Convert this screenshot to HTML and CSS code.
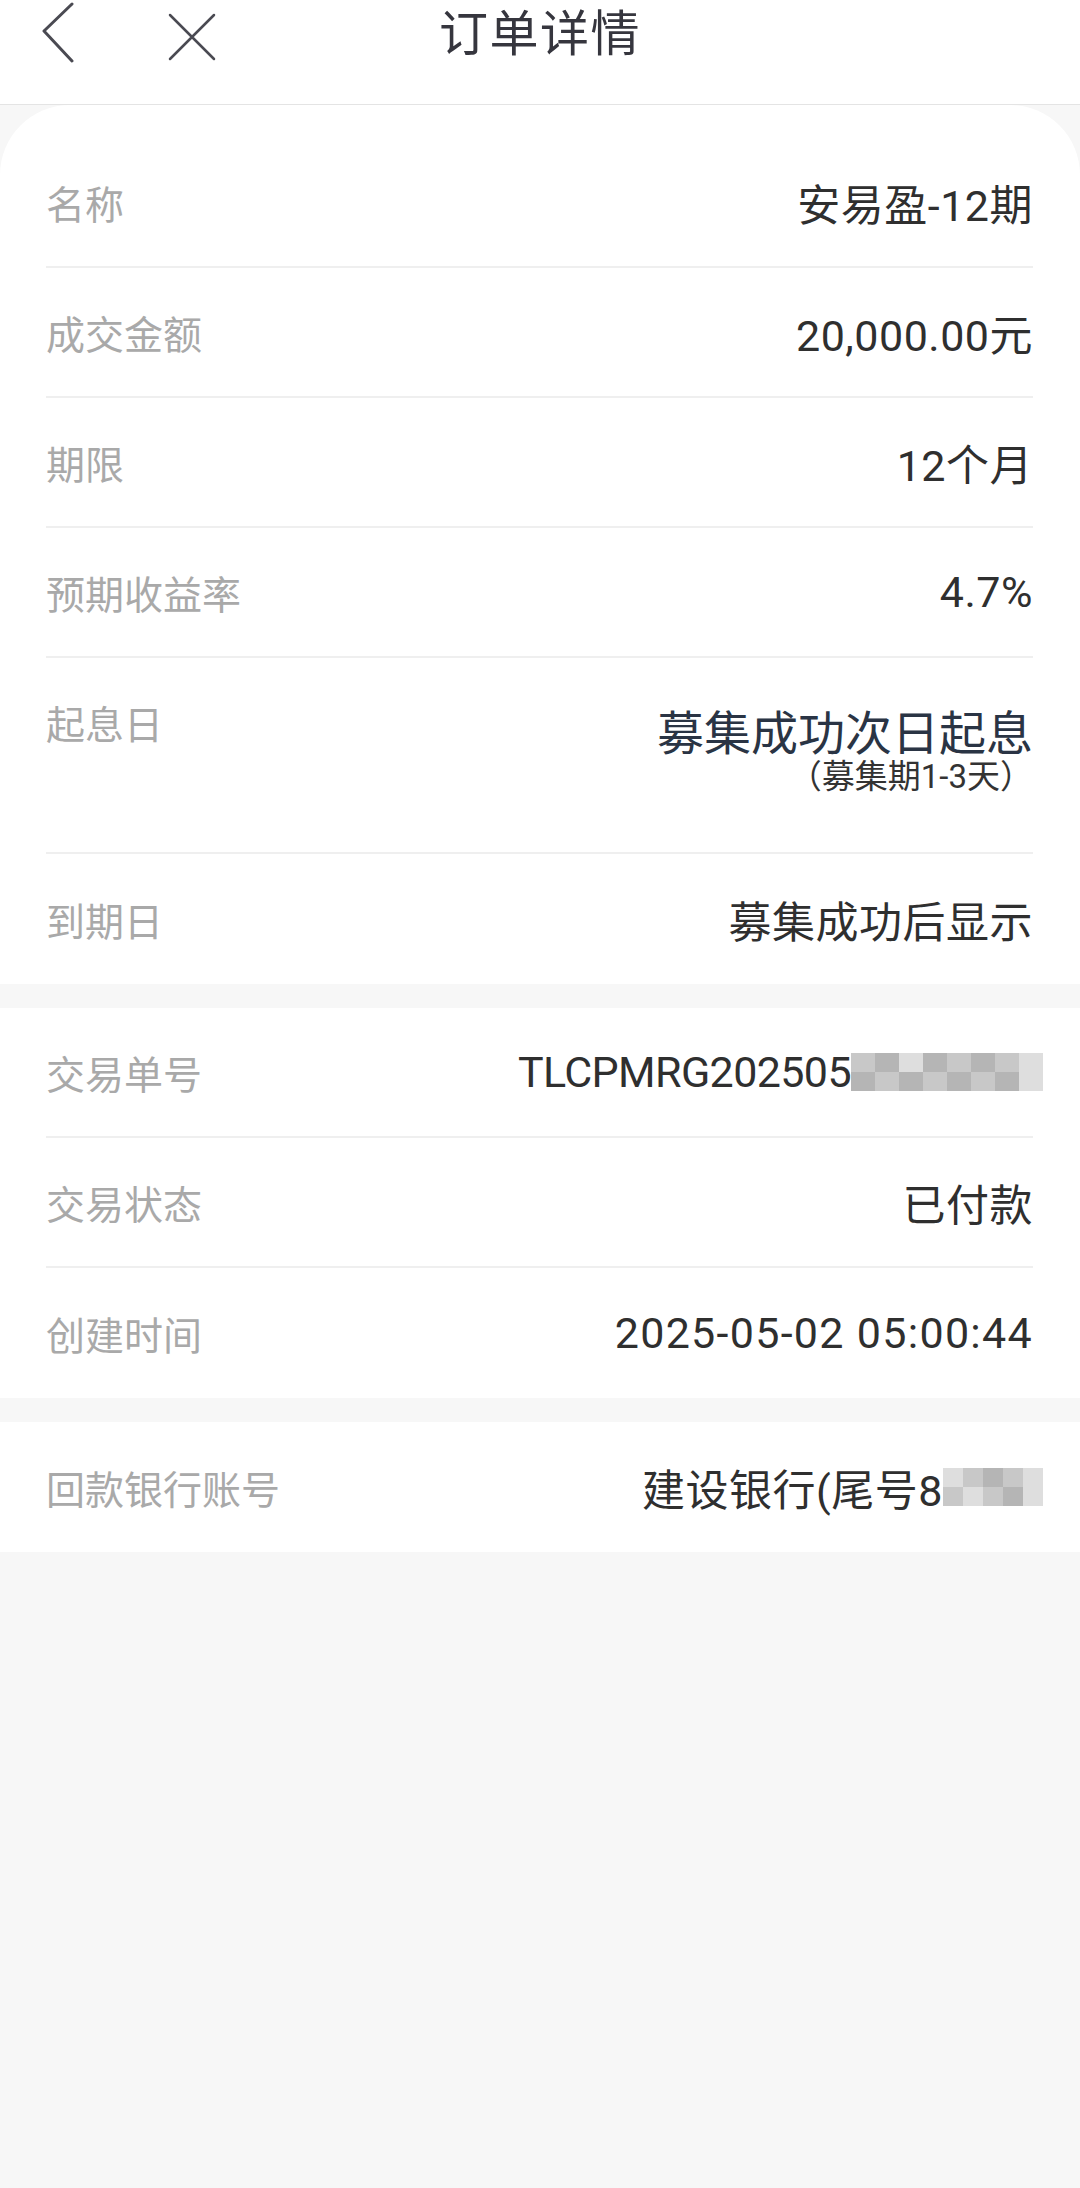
FILE: index.html
```html
<!DOCTYPE html>
<html lang="zh-CN">
<head>
    <meta charset="UTF-8">
    <meta name="viewport" content="width=device-width, initial-scale=1.0">
    <title>订单详情</title>
    <link rel="stylesheet" href="styles.css">
</head>
<body>

<div class="header">
    <div class="nav-left">
        <svg class="icon-back" width="40" height="64" viewBox="0 0 40 64">
            <path d="M32 2 L4 29 L32 59" fill="none" stroke="#4a4a52" stroke-width="3" stroke-linecap="round" stroke-linejoin="round"/>
        </svg>
        <svg class="icon-close" width="50" height="50" viewBox="0 0 50 50">
            <path d="M3 3 L47 47 M47 3 L3 47" fill="none" stroke="#4a4a52" stroke-width="2.5" stroke-linecap="round"/>
        </svg>
    </div>
    <h1 class="title">订单详情</h1>
</div>

<div class="section first">
    <div class="row">
        <span class="label">名称</span>
        <span class="value">安易盈-12期</span>
    </div>
    <div class="row">
        <span class="label">成交金额</span>
        <span class="value">20,000.00元</span>
    </div>
    <div class="row">
        <span class="label">期限</span>
        <span class="value">12个月</span>
    </div>
    <div class="row">
        <span class="label">预期收益率</span>
        <span class="value">4.7%</span>
    </div>
    <div class="row tall">
        <span class="label">起息日</span>
        <div class="value-block">
            <div class="value-main">募集成功次日起息</div>
            <div class="value-sub">（募集期1-3天）</div>
        </div>
    </div>
    <div class="row">
        <span class="label">到期日</span>
        <span class="value">募集成功后显示</span>
    </div>
</div>

<div class="section">
    <div class="row">
        <span class="label">交易单号</span>
        <span class="value code">TLCPMRG202505<span class="mosaic">
            <i class="m2"></i><i class="m1"></i><i class="m3"></i><i class="m1"></i><i class="m2"></i><i class="m1"></i><i class="m2"></i><i class="m3"></i>
            <i class="m1"></i><i class="m2"></i><i class="m1"></i><i class="m2"></i><i class="m1"></i><i class="m2"></i><i class="m1"></i><i class="m3"></i>
        </span></span>
    </div>
    <div class="row">
        <span class="label">交易状态</span>
        <span class="value">已付款</span>
    </div>
    <div class="row">
        <span class="label">创建时间</span>
        <span class="value date">2025-05-02 05:00:44</span>
    </div>
</div>

<div class="section">
    <div class="row">
        <span class="label">回款银行账号</span>
        <span class="value">建设银行(尾号8<span class="mosaic short">
            <i class="m3"></i><i class="m2"></i><i class="m1"></i><i class="m2"></i><i class="m3"></i>
            <i class="m2"></i><i class="m3"></i><i class="m2"></i><i class="m1"></i><i class="m3"></i>
        </span></span>
    </div>
</div>

</body>
</html>
```

FILE: styles.css
```css
body {
    margin: 0;
    background-color: #f7f7f7;
    font-family: Roboto, "Noto Sans CJK SC", sans-serif;
    min-height: 2188px;
}
.header {
    height: 104px;
    background-color: #fff;
    border-bottom: 1px solid #e4e4e4;
    display: flex;
    justify-content: center;
    position: relative;
}
.nav-left {
    position: absolute;
    left: 40px;
    top: 2px;
    display: flex;
    align-items: flex-start;
    gap: 87px;
}
.icon-close {
    margin-top: 10px;
}
.title {
    margin: 0;
    height: 70px;
    line-height: 70px;
    font-size: 49px;
    font-weight: normal;
    color: #36363e;
    letter-spacing: 1.5px;
}
.section {
    background-color: #fff;
    padding: 0 47px 0 46px;
    margin-bottom: 24px;
}
.section.first {
    border-radius: 70px 70px 0 0;
    padding-top: 33px;
}
.row {
    height: 130px;
    box-sizing: border-box;
    display: flex;
    align-items: center;
    justify-content: space-between;
    border-bottom: 2px solid #efefef;
}
.row:last-child {
    border-bottom: none;
}
.row.tall {
    height: 196px;
    align-items: flex-start;
    padding-top: 36px;
}
.label {
    font-size: 39px;
    line-height: 56px;
    padding-top: 8px;
    color: #a9a9a9;
}
.row.tall .label {
    padding-top: 4px;
}
.value {
    font-size: 43px;
    color: #2f2f2f;
    letter-spacing: 0.5px;
    display: flex;
    align-items: center;
}
.value.code {
    letter-spacing: -0.6px;
}
.value.date {
    letter-spacing: 1.3px;
}
.value-block {
    margin-top: 12px;
    text-align: right;
}
.value-main {
    font-size: 47px;
    line-height: 56px;
    color: #2a3444;
}
.value-sub {
    font-size: 33px;
    line-height: 30px;
    color: #333;
}
.mosaic {
    display: inline-grid;
    grid-template-columns: repeat(8, 24px);
    grid-auto-rows: 19px;
    margin-right: -10px;
}
.mosaic.short {
    grid-template-columns: repeat(5, 20px);
}
.mosaic i {
    display: block;
}
.m1 { background-color: #b5b5b5; }
.m2 { background-color: #c8c8c8; }
.m3 { background-color: #dedede; }
```
